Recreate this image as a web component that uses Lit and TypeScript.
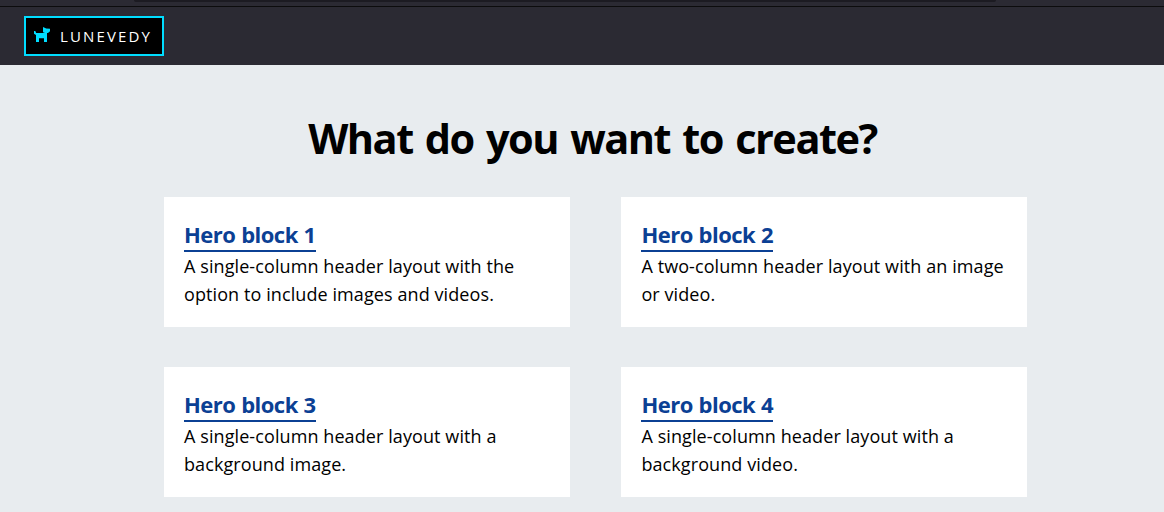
import { LitElement, html, css } from "lit";
import { customElement, property } from "lit/decorators.js";

@customElement("block-card")
class BlockCard extends LitElement {
  @property() heading = "";
  @property() text = "";

  static styles = css`
    :host {
      display: block;
      box-sizing: border-box;
      height: 130px;
      padding: 24px 20px 0;
      background: #fff;
    }
    .link {
      display: block;
      width: fit-content;
      height: 29px;
      line-height: 27px;
      border-bottom: 2px solid #0b4094;
      color: #0b4094;
      font-size: 22px;
      font-weight: 700;
      letter-spacing: -0.52px;
      word-spacing: 0.6px;
      text-decoration: none;
      white-space: nowrap;
    }
    .text {
      margin: 0 -5px 0 0;
      font-size: 18px;
      line-height: 28px;
      letter-spacing: 0.09px;
      color: #000;
      white-space: pre-line;
    }
  `;

  render() {
    return html`<a class="link" href="#">${this.heading}</a>
      <p class="text">${this.text}</p>`;
  }
}

@customElement("app-root")
class AppRoot extends LitElement {
  private blocks = [
    ["Hero block 1", "A single-column header layout with the\noption to include images and videos."],
    ["Hero block 2", "A two-column header layout with an image\nor video."],
    ["Hero block 3", "A single-column header layout with a\nbackground image."],
    ["Hero block 4", "A single-column header layout with a\nbackground video."],
  ];

  static styles = css`
    :host {
      display: block;
      box-sizing: border-box;
      height: 512px;
      overflow: hidden;
      background: #e8ecef;
      font-family: "Open Sans", "Noto Sans", sans-serif;
    }
    .strip {
      box-sizing: border-box;
      height: 7px;
      padding: 0 168px 0 134px;
      background: #2b2a33;
      border-bottom: 1px solid #0c0c0d;
    }
    .field {
      height: 2px;
      background: #1c1b22;
      border-radius: 0 0 4px 4px;
    }
    .bar {
      box-sizing: border-box;
      height: 58px;
      padding: 9px 24px;
      background: #2b2a33;
    }
    .brand {
      box-sizing: border-box;
      display: flex;
      align-items: center;
      width: 140px;
      height: 40px;
      padding-left: 8px;
      border: 2px solid #00ddff;
      background: #000;
      color: #fff;
      font-size: 15px;
      letter-spacing: 2.15px;
    }
    .dog {
      width: 17px;
      height: 16px;
      margin: -3px 9px 0 0;
      fill: #00ddff;
    }
    .title {
      margin: 43px 0 0 21px;
      height: 61px;
      line-height: 60px;
      text-align: center;
      font-size: 41.5px;
      font-weight: 700;
      letter-spacing: -1.5px;
      word-spacing: 2.9px;
      color: #000;
      white-space: nowrap;
    }
    .grid {
      display: grid;
      grid-template-columns: 406px 406px;
      gap: 40px 51.4px;
      margin: 28px 0 0 164px;
    }
  `;

  render() {
    return html`
      <div class="strip"><div class="field"></div></div>
      <header class="bar">
        <div class="brand">
          <svg class="dog" viewBox="0 0 17 16">
            <path d="M0 4h1.3l.9 2H13v9h-3v-3.8H5V15H2V8L0 6.8z" />
            <path d="M9 0l3.2 1.6 3.8.2v2.4L14 6h-3L9 5.2z" />
          </svg>
          <span>LUNEVEDY</span>
        </div>
      </header>
      <h1 class="title">What do you want to create?</h1>
      <main class="grid">
        ${this.blocks.map(([h, t]) => html`<block-card .heading=${h} .text=${t}></block-card>`)}
      </main>
    `;
  }
}
